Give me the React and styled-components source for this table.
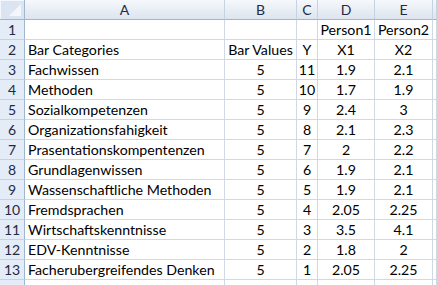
import { Fragment } from "react"
import styled, { createGlobalStyle } from "styled-components"

const GlobalStyle = createGlobalStyle`
  html, body {
    margin: 0;
    padding: 0;
    background: #fff;
    overflow: hidden;
  }
  body {
    font-family: "Lato", "Liberation Sans", sans-serif;
  }
`

const cols = "25px 200px 72px 21px 57px 58px 1fr"

const Sheet = styled.div`
  width: 437px;
  height: 285px;
  overflow: hidden;
  display: grid;
  grid-template-columns: ${cols};
  grid-auto-rows: 20px;
  font-size: 14.2px;
  color: #000;
`

const Corner = styled.div`
  position: relative;
  background: #dbe5f1;
  border-right: 1px solid #9eb6ce;
  border-bottom: 1px solid #9eb6ce;
  box-shadow: inset 1px 1px 0 #f4f8fc;

  &::after {
    content: "";
    position: absolute;
    right: 3px;
    bottom: 3px;
    width: 0;
    height: 0;
    border-left: 12px solid transparent;
    border-bottom: 12px solid #f3f6fa;
  }
`

const ColHead = styled.div`
  display: flex;
  align-items: center;
  justify-content: center;
  background: linear-gradient(to bottom, #f5f8fc 0%, #e9eef5 50%, #dde5ef 100%);
  border-right: 1px solid #c5d2e2;
  border-bottom: 1px solid #9eb6ce;
  color: #1f2a44;
  font-size: 14px;
`

const RowHead = styled.div`
  display: flex;
  align-items: flex-end;
  justify-content: center;
  padding-bottom: 2px;
  box-sizing: border-box;
  background: #e4ecf7;
  border-right: 1px solid #9eb6ce;
  border-bottom: 1px solid #c5d2e2;
  color: #1f2a44;
  font-size: 14px;
  line-height: 1;
`

const Cell = styled.div`
  display: flex;
  align-items: flex-end;
  justify-content: ${(p) => (p.$align === "left" ? "flex-start" : "center")};
  padding: 0 ${(p) => (p.$align === "left" ? "3px" : "0")} 2px;
  box-sizing: border-box;
  border-right: 1px solid #d0d7e5;
  border-bottom: 1px solid #d0d7e5;
  white-space: nowrap;
  line-height: 1;
`

const rows = [
  ["", "", "", "Person1", "Person2"],
  ["Bar Categories", "Bar Values", "Y", "X1", "X2"],
  ["Fachwissen", "5", "11", "1.9", "2.1"],
  ["Methoden", "5", "10", "1.7", "1.9"],
  ["Sozialkompetenzen", "5", "9", "2.4", "3"],
  ["Organizationsfahigkeit", "5", "8", "2.1", "2.3"],
  ["Prasentationskompentenzen", "5", "7", "2", "2.2"],
  ["Grundlagenwissen", "5", "6", "1.9", "2.1"],
  ["Wassenschaftliche Methoden", "5", "5", "1.9", "2.1"],
  ["Fremdsprachen", "5", "4", "2.05", "2.25"],
  ["Wirtschaftskenntnisse", "5", "3", "3.5", "4.1"],
  ["EDV-Kenntnisse", "5", "2", "1.8", "2"],
  ["Facherubergreifendes Denken", "5", "1", "2.05", "2.25"],
]

const App = () => {
  return (
    <>
      <GlobalStyle />
      <Sheet>
        <Corner />
        {["A", "B", "C", "D", "E", ""].map((c, i) => (
          <ColHead key={i}>{c}</ColHead>
        ))}
        {rows.map((r, i) => (
          <Fragment key={i}>
            <RowHead>{i + 1}</RowHead>
            {r.map((v, j) => (
              <Cell key={j} $align={j === 0 ? "left" : "center"}>
                {v}
              </Cell>
            ))}
            <Cell />
          </Fragment>
        ))}
        <RowHead />
        {[0, 1, 2, 3, 4, 5].map((j) => (
          <Cell key={"e" + j} />
        ))}
      </Sheet>
    </>
  )
}

export default App
